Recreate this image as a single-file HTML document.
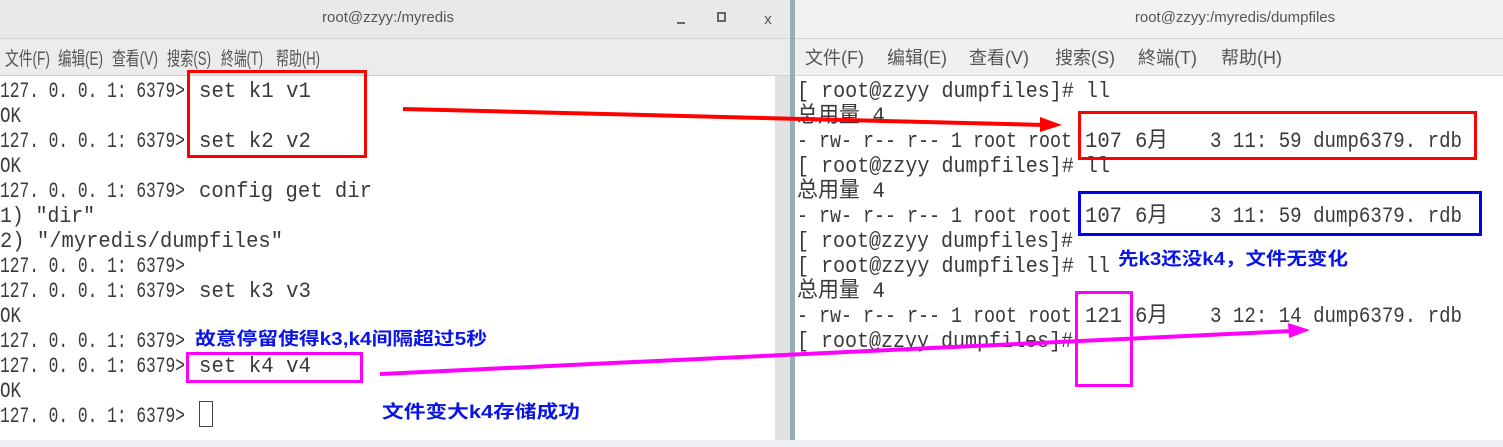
<!DOCTYPE html>
<html><head><meta charset="utf-8"><style>
html,body{margin:0;padding:0;width:1503px;height:447px;overflow:hidden;background:#fff}
svg{display:block}
.t{font-family:"Liberation Mono","Noto Sans CJK SC",monospace;font-size:22px;fill:#3a3a3a}
.m{font-family:"Liberation Sans","Noto Sans CJK SC",sans-serif;fill:#555}
.a{font-family:"Liberation Sans","Noto Sans CJK SC",sans-serif;font-weight:bold;font-size:18px;fill:#0a14e6}
</style></head><body>
<svg width="1503" height="447" xmlns="http://www.w3.org/2000/svg">
<rect x="0" y="0" width="790" height="38" fill="#e9e9e9"/>
<rect x="0" y="38" width="790" height="37" fill="#ececec"/>
<line x1="0" y1="38.5" x2="790" y2="38.5" stroke="#d0d0d0"/>
<line x1="0" y1="75.5" x2="790" y2="75.5" stroke="#d0d0d0"/>
<text x="388" y="22" text-anchor="middle" class="m" font-size="15" fill="#5a5a5a">root@zzyy:/myredis</text>
<rect x="677" y="22" width="8" height="2" fill="#666"/>
<rect x="718" y="13" width="7" height="8" fill="none" stroke="#666" stroke-width="2"/>
<text x="768" y="24" text-anchor="middle" class="m" font-size="15" fill="#666">x</text>
<g class="m" font-size="19">
<text x="5" y="65" textLength="45" lengthAdjust="spacingAndGlyphs">文件(F)</text><text x="58" y="65" textLength="45" lengthAdjust="spacingAndGlyphs">编辑(E)</text><text x="112" y="65" textLength="46" lengthAdjust="spacingAndGlyphs">查看(V)</text><text x="167" y="65" textLength="44" lengthAdjust="spacingAndGlyphs">搜索(S)</text><text x="221" y="65" textLength="42" lengthAdjust="spacingAndGlyphs">終端(T)</text><text x="276" y="65" textLength="44" lengthAdjust="spacingAndGlyphs">帮助(H)</text>
</g>
<rect x="775" y="76" width="15" height="364" fill="#e2e2e2"/>
<rect x="790" y="0" width="5" height="440" fill="#8fb1b7"/>
<rect x="795" y="0" width="708" height="38" fill="#f2f2f2"/>
<rect x="795" y="38" width="708" height="37" fill="#f0f0f0"/>
<line x1="795" y1="38.5" x2="1503" y2="38.5" stroke="#d4d4d4"/>
<line x1="795" y1="75.5" x2="1503" y2="75.5" stroke="#d4d4d4"/>
<text x="1235" y="22" text-anchor="middle" class="m" font-size="15" fill="#333">root@zzyy:/myredis/dumpfiles</text>
<g class="m" font-size="18" fill="#333">
<text x="805" y="64">文件(F)</text><text x="887" y="64">编辑(E)</text><text x="969" y="64">查看(V)</text><text x="1055" y="64">搜索(S)</text><text x="1138" y="64">終端(T)</text><text x="1221" y="64">帮助(H)</text>
</g>
<rect x="0" y="440" width="1503" height="7" fill="#eef0f5"/>
<g class="t">
<text x="0" y="97" textLength="185" lengthAdjust="spacingAndGlyphs">127. 0. 0. 1: 6379&gt;</text><text x="199" y="97" textLength="112" lengthAdjust="spacingAndGlyphs">set k1 v1</text>
<text x="0" y="122" textLength="21" lengthAdjust="spacingAndGlyphs">OK</text>
<text x="0" y="147" textLength="185" lengthAdjust="spacingAndGlyphs">127. 0. 0. 1: 6379&gt;</text><text x="199" y="147" textLength="112" lengthAdjust="spacingAndGlyphs">set k2 v2</text>
<text x="0" y="172" textLength="21" lengthAdjust="spacingAndGlyphs">OK</text>
<text x="0" y="197" textLength="185" lengthAdjust="spacingAndGlyphs">127. 0. 0. 1: 6379&gt;</text><text x="199" y="197" textLength="173" lengthAdjust="spacingAndGlyphs">config get dir</text>
<text x="0" y="222" textLength="95" lengthAdjust="spacingAndGlyphs">1)  "dir"</text>
<text x="0" y="247" textLength="283" lengthAdjust="spacingAndGlyphs">2)  "/myredis/dumpfiles"</text>
<text x="0" y="272" textLength="185" lengthAdjust="spacingAndGlyphs">127. 0. 0. 1: 6379&gt;</text>
<text x="0" y="297" textLength="185" lengthAdjust="spacingAndGlyphs">127. 0. 0. 1: 6379&gt;</text><text x="199" y="297" textLength="112" lengthAdjust="spacingAndGlyphs">set k3 v3</text>
<text x="0" y="322" textLength="21" lengthAdjust="spacingAndGlyphs">OK</text>
<text x="0" y="347" textLength="185" lengthAdjust="spacingAndGlyphs">127. 0. 0. 1: 6379&gt;</text>
<text x="0" y="372" textLength="185" lengthAdjust="spacingAndGlyphs">127. 0. 0. 1: 6379&gt;</text><text x="199" y="372" textLength="112" lengthAdjust="spacingAndGlyphs">set k4 v4</text>
<text x="0" y="397" textLength="21" lengthAdjust="spacingAndGlyphs">OK</text>
<text x="0" y="422" textLength="185" lengthAdjust="spacingAndGlyphs">127. 0. 0. 1: 6379&gt;</text>
</g>
<rect x="199.5" y="401.5" width="13" height="25" fill="none" stroke="#444"/>
<g class="t">
<text x="797" y="97" textLength="313" lengthAdjust="spacingAndGlyphs">[ root@zzyy dumpfiles]# ll</text>
<text x="797" y="122" textLength="88" lengthAdjust="spacingAndGlyphs">总用量 4</text>
<text x="797" y="147" textLength="275" lengthAdjust="spacingAndGlyphs">- rw- r-- r--  1 root root</text><text x="1085" y="147" textLength="37" lengthAdjust="spacingAndGlyphs">107</text><text x="1135" y="147" textLength="33" lengthAdjust="spacingAndGlyphs">6月</text><text x="1210" y="147" textLength="252" lengthAdjust="spacingAndGlyphs">3 11: 59 dump6379. rdb</text>
<text x="797" y="172" textLength="313" lengthAdjust="spacingAndGlyphs">[ root@zzyy dumpfiles]# ll</text>
<text x="797" y="197" textLength="88" lengthAdjust="spacingAndGlyphs">总用量 4</text>
<text x="797" y="222" textLength="275" lengthAdjust="spacingAndGlyphs">- rw- r-- r--  1 root root</text><text x="1085" y="222" textLength="37" lengthAdjust="spacingAndGlyphs">107</text><text x="1135" y="222" textLength="33" lengthAdjust="spacingAndGlyphs">6月</text><text x="1210" y="222" textLength="252" lengthAdjust="spacingAndGlyphs">3 11: 59 dump6379. rdb</text>
<text x="797" y="247" textLength="276" lengthAdjust="spacingAndGlyphs">[ root@zzyy dumpfiles]#</text>
<text x="797" y="272" textLength="313" lengthAdjust="spacingAndGlyphs">[ root@zzyy dumpfiles]# ll</text>
<text x="797" y="297" textLength="88" lengthAdjust="spacingAndGlyphs">总用量 4</text>
<text x="797" y="322" textLength="275" lengthAdjust="spacingAndGlyphs">- rw- r-- r--  1 root root</text><text x="1085" y="322" textLength="37" lengthAdjust="spacingAndGlyphs">121</text><text x="1135" y="322" textLength="33" lengthAdjust="spacingAndGlyphs">6月</text><text x="1210" y="322" textLength="252" lengthAdjust="spacingAndGlyphs">3 12: 14 dump6379. rdb</text>
<text x="797" y="347" textLength="276" lengthAdjust="spacingAndGlyphs">[ root@zzyy dumpfiles]#</text>
</g>
<rect x="188.5" y="71.5" width="177" height="85" fill="none" stroke="#f00" stroke-width="3"/>
<rect x="1079.5" y="112.5" width="396" height="46" fill="none" stroke="#f00" stroke-width="3"/>
<rect x="1079.5" y="192.5" width="401" height="42" fill="none" stroke="#0000f0" stroke-width="3"/>
<rect x="187.5" y="353.5" width="174" height="28" fill="none" stroke="#f0f" stroke-width="3"/>
<rect x="1076.5" y="292.5" width="55" height="93" fill="none" stroke="#f0f" stroke-width="3"/>
<line x1="403" y1="109" x2="1045" y2="125" stroke="#f00" stroke-width="4"/>
<polygon points="1040,117 1062,125 1040,132" fill="#f00"/>
<line x1="380" y1="374" x2="1292" y2="331" stroke="#f0f" stroke-width="4"/>
<polygon points="1288,323 1310,330 1289,338" fill="#f0f"/>
<text x="195" y="345" class="a" textLength="292" lengthAdjust="spacingAndGlyphs">故意停留使得k3,k4间隔超过5秒</text>
<text x="382" y="418" class="a" textLength="198" lengthAdjust="spacingAndGlyphs">文件变大k4存储成功</text>
<text x="1118" y="265" class="a" textLength="230" lengthAdjust="spacingAndGlyphs">先k3还没k4，文件无变化</text>
</svg>
</body></html>
